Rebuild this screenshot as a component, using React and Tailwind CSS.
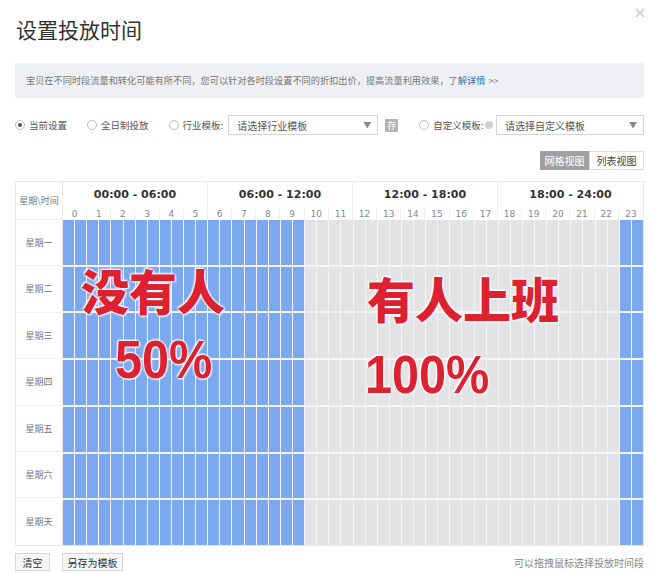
import { X } from 'lucide-react'

const CJK = { fontFamily: '"Noto Sans CJK SC", "Noto Sans", sans-serif' }
const days = ['星期一', '星期二', '星期三', '星期四', '星期五', '星期六', '星期天']
const ranges = ['00:00 - 06:00', '06:00 - 12:00', '12:00 - 18:00', '18:00 - 24:00']
const hours = Array.from({ length: 24 }, (_, i) => i)
const isOn = (half) => half < 20 || half >= 46

const Radio = ({ checked, label }) => (
  <label className="flex items-center gap-[4px] text-[9.5px] text-[#555] whitespace-nowrap shrink-0">
    <span className="w-[10px] h-[10px] rounded-full border border-[#bbb] bg-white flex items-center justify-center">
      {checked && <span className="w-[4px] h-[4px] rounded-full bg-[#555]" />}
    </span>
    {label}
  </label>
)

const Select = ({ text, w }) => (
  <div className={`${w} h-[20px] border border-[#d4d4d4] bg-white flex items-center justify-between pl-[8px] pr-[6px] text-[10px] text-[#555] whitespace-nowrap shrink-0`}>
    <span>{text}</span>
    <span className="text-[8px] text-[#888]">▼</span>
  </div>
)

const shadow = { textShadow: '0 0 2px #fff, 0 0 3px #fff, 1px 1px 2px #fff, -1px -1px 2px #fff' }

export default function App() {
  return (
    <div className="w-[659px] h-[573px] bg-white px-[15px] pt-[14px] relative overflow-hidden" style={CJK}>
      <X className="absolute right-[12px] top-[6px] w-[14px] h-[14px] text-[#ccc]" strokeWidth={3} />

      <h1 className="text-[21px] leading-[30px] text-[#333] pl-[1px]">设置投放时间</h1>

      <div className="mt-[19px] h-[35px] bg-[#eef0f3] flex items-center pl-[11px] text-[9.2px] text-[#777] whitespace-nowrap">
        宝贝在不同时段流量和转化可能有所不同，您可以针对各时段设置不同的折扣出价，提高流量利用效果，了
        <span className="text-[#2e6eb8]">解详情</span>
        <span className="ml-[3px] text-[#888]">&gt;&gt;</span>
      </div>

      <div className="mt-[17px] flex items-center h-[20px]">
        <Radio checked label="当前设置" />
        <div className="ml-[20px]"><Radio label="全日制投放" /></div>
        <div className="ml-[20px]"><Radio label="行业模板:" /></div>
        <div className="ml-[5px]"><Select text="请选择行业模板" w="w-[150px]" /></div>
        <div className="ml-[7px] w-[13px] h-[13px] shrink-0 bg-[#b3b3b3] text-white text-[9px] leading-[13px] text-center">存</div>
        <div className="ml-[21px]"><Radio label="自定义模板:" /></div>
        <span className="ml-[2px] w-[8px] h-[8px] shrink-0 rounded-full bg-[#d0d0d0]" />
        <div className="ml-auto"><Select text="请选择自定义模板" w="w-[148px]" /></div>
      </div>

      <div className="mt-[16px] flex justify-end">
        <div className="flex h-[19px] text-[10px]">
          <div className="w-[49px] bg-[#a0a0a0] text-white flex items-center justify-center">网格视图</div>
          <div className="w-[55px] border border-[#ddd] text-[#444] flex items-center justify-center">列表视图</div>
        </div>
      </div>

      <div className="mt-[11px] flex border border-[#e8e8e8]">
        <div className="w-[47px] border-r border-[#e8e8e8] flex flex-col">
          <div className="h-[38px] flex items-center justify-center text-[9px] text-[#777] border-b border-[#eee]">星期\时间</div>
          {days.map((d) => (
            <div key={d} className="h-[46.4px] flex items-center justify-center text-[9px] text-[#777] border-b border-[#f0f0f0] last:border-b-0">{d}</div>
          ))}
        </div>

        <div className="flex-1 flex flex-col">
          <div className="h-[26px] grid grid-cols-4">
            {ranges.map((r, i) => (
              <div
                key={r}
                className={`flex items-center justify-center text-[11px] font-bold text-[#333] ${i < 3 ? 'border-r border-[#eee]' : ''}`}
                style={{ fontFamily: '"DejaVu Sans", Verdana, sans-serif' }}
              >
                {r}
              </div>
            ))}
          </div>
          <div className="h-[12px] grid grid-cols-[repeat(24,minmax(0,1fr))]">
            {hours.map((h) => (
              <div
                key={h}
                className="flex items-center justify-center text-[9px] leading-none text-[#888] border-r border-[#f0f0f0] last:border-r-0"
                style={{ fontFamily: '"DejaVu Sans", Verdana, sans-serif' }}
              >
                {h}
              </div>
            ))}
          </div>

          <div className="relative h-[325px] grid grid-cols-[repeat(48,minmax(0,1fr))] grid-rows-7 gap-x-px gap-y-[2px] bg-[#f4f4f6]">
            {days.map((d) =>
              Array.from({ length: 48 }, (_, i) => (
                <div key={d + i} className={isOn(i) ? 'bg-[#7ba8ee]' : 'bg-[#e3e3e6]'} />
              ))
            )}
            <div className="absolute left-[18px] top-[45px] text-[48px] leading-none font-black text-[#dc2131] whitespace-nowrap" style={{ ...CJK, ...shadow }}>没有人</div>
            <div className="absolute left-[52px] top-[112px] text-[54px] leading-none font-bold text-[#dc2131] whitespace-nowrap scale-x-90 origin-left" style={{ fontFamily: '"Liberation Sans", Arial, sans-serif', ...shadow }}>50%</div>
            <div className="absolute left-[304px] top-[53px] text-[48px] leading-none font-black text-[#dc2131] whitespace-nowrap" style={{ ...CJK, ...shadow }}>有人上班</div>
            <div className="absolute left-[302px] top-[127px] text-[54px] leading-none font-bold text-[#dc2131] whitespace-nowrap scale-x-90 origin-left" style={{ fontFamily: '"Liberation Sans", Arial, sans-serif', ...shadow }}>100%</div>
          </div>
        </div>
      </div>

      <div className="mt-[7px] flex items-center justify-between">
        <div className="flex gap-[12px] text-[10px] text-[#333]">
          <div className="h-[18px] w-[35px] border border-[#d6d6d6] bg-[#f6f6f6] flex items-center justify-center">清空</div>
          <div className="h-[18px] w-[61px] border border-[#d6d6d6] bg-[#f6f6f6] flex items-center justify-center">另存为模板</div>
        </div>
        <div className="text-[10px] text-[#888]">可以拖拽鼠标选择投放时间段</div>
      </div>
    </div>
  )
}
